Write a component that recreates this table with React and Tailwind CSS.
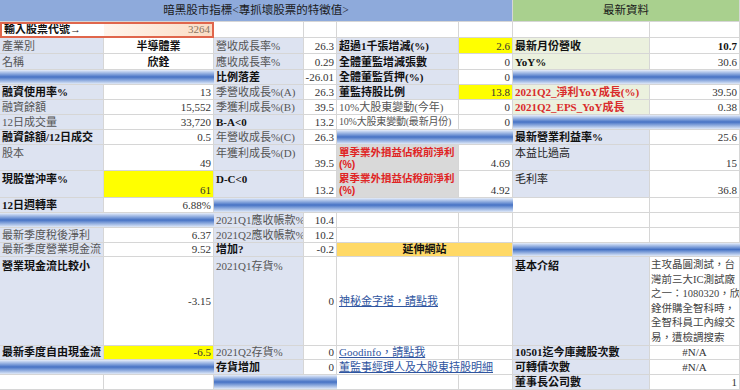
import clsx from "clsx";
import { twMerge } from "tailwind-merge";

// one spreadsheet cell
function C({ className = "", children }) {
  return (
    <div
      className={twMerge(
        clsx(
          "flex items-end overflow-hidden whitespace-nowrap border-r border-b border-[#d6d6d6] px-[2px] leading-[13px]",
          className
        )
      )}
    >
      {children}
    </div>
  );
}

const lab = "bg-[#dde3f1] text-[#555]";
const labD = "bg-[#dde3f1] text-[#222]";
const labB = "bg-[#dde3f1] font-bold text-[#111]";
const num = "justify-end text-[#333]";
const bar = "bg-linear-to-b from-[#e6edf9] via-[#4672c4] to-[#e0e9f7] border-r-0";
const grn = "bg-[#ebf1de] font-bold text-[#111]";
const red = "bg-[#ebf1de] font-bold text-[#d92b2b]";
const gray =
  "bg-[#d9d9d9] flex-col items-start pt-[1px] font-['Liberation_Sans','Noto_Sans_CJK_TC',sans-serif] font-bold text-[10.5px] text-[#e02424] leading-[12px]";
const yel = "bg-[#ffff00] justify-end text-[#333]";
const link = "text-[#2f55a0] underline";

const intro = [
  "主攻晶圓測試，台",
  "灣前三大IC測試廠",
  "之一：1080320，欣",
  "銓併購全智科時，",
  "全智科員工內線交",
  "易，遭檢調搜索",
];

export default function App() {
  return (
    <div className="w-[740px] h-[390px] overflow-hidden bg-white font-['Liberation_Serif','Noto_Sans_CJK_TC',serif] text-[11px]">
      <div className="grid grid-cols-[104px_110px_90px_33px_122px_54px_137px_90px] grid-rows-[22px_16px_16px_16px_15px_15px_15px_15px_15px_26px_27px_15px_15px_15px_14px_89px_14px_15px_15px]">
        {/* header */}
        <C className="col-span-6 items-center justify-center bg-[#8eaadb] text-[11.5px] text-[#1a1a1a]">
          暗黑股市指標&lt;專抓壞股票的特徵值&gt;
        </C>
        <C className="col-span-2 items-center justify-center bg-[#a9d08e] text-[11.5px] text-[#1a1a1a]">
          最新資料
        </C>

        {/* row 2 */}
        <C className="border-y-2 border-l-2 border-r-0 border-[#e0664c] font-bold text-[#111]">輸入股票代號→</C>
        <C className="border-y-2 border-r-2 border-[#e0664c] bg-linear-to-r from-[#fff5ec] to-[#fbdcc4] justify-end text-[#8a7560]">
          3264
        </C>
        <C />
        <C />
        <C />
        <C />
        <C />
        <C />

        {/* row 3 */}
        <C className={lab}>產業別</C>
        <C className="justify-center font-bold text-[#111]">半導體業</C>
        <C className={lab}>營收成長率%</C>
        <C className={num}>26.3</C>
        <C className={labB}>超過1千張增減(%)</C>
        <C className={yel}>2.6</C>
        <C className={grn}>最新月份營收</C>
        <C className="justify-end font-bold text-[#111]">10.7</C>

        {/* row 4 */}
        <C className={lab}>名稱</C>
        <C className="justify-center font-bold text-[#111]">欣銓</C>
        <C className={lab}>應收成長率%</C>
        <C className={num}>0.29</C>
        <C className={labB}>全體董監增減張數</C>
        <C className={num}>0</C>
        <C className={grn}>YoY%</C>
        <C className={num}>30.6</C>

        {/* row 5 */}
        <C className={clsx("col-span-2", bar)} />
        <C className={labB}>比例落差</C>
        <C className={num}>-26.01</C>
        <C className={labB}>全體董監質押(%)</C>
        <C className={num}>0</C>
        <C className={clsx("col-span-2", bar)} />

        {/* row 6 */}
        <C className={labB}>融資使用率%</C>
        <C className={num}>13</C>
        <C className={lab}>季營收成長%(A)</C>
        <C className={num}>26.3</C>
        <C className={labB}>董監持股比例</C>
        <C className={yel}>13.8</C>
        <C className={red}>2021Q2_淨利YoY成長(%)</C>
        <C className={num}>39.50</C>

        {/* row 7 */}
        <C className={lab}>融資餘額</C>
        <C className={num}>15,552</C>
        <C className={lab}>季獲利成長%(B)</C>
        <C className={num}>39.5</C>
        <C className="text-[#555]">10%大股東變動(今年)</C>
        <C className={num}>0</C>
        <C className={red}>2021Q2_EPS_YoY成長</C>
        <C className={num}>0.38</C>

        {/* row 8 */}
        <C className={lab}>12日成交量</C>
        <C className={num}>33,720</C>
        <C className={labB}>B-A&lt;0</C>
        <C className={num}>13.2</C>
        <C className="text-[10px] tracking-[-0.2px] text-[#555]">10%大股東變動(最新月份)</C>
        <C className={num}>0</C>
        <C className={clsx("col-span-2", bar)} />

        {/* row 9 */}
        <C className={labB}>融資餘額/12日成交</C>
        <C className={num}>0.5</C>
        <C className={lab}>年營收成長%(C)</C>
        <C className={num}>26.3</C>
        <C className={clsx("col-span-2", bar)} />
        <C className={labB}>最新營業利益率%</C>
        <C className={num}>25.6</C>

        {/* row 10 */}
        <C className={clsx(lab, "items-start pt-[2px]")}>股本</C>
        <C className={num}>49</C>
        <C className={clsx(lab, "items-start pt-[2px]")}>年獲利成長%(D)</C>
        <C className={num}>39.5</C>
        <C className={gray}>
          <span>單季業外損益佔稅前淨利</span>
          <span>(%)</span>
        </C>
        <C className={num}>4.69</C>
        <C className={clsx(labD, "items-start pt-[2px]")}>本益比過高</C>
        <C className={num}>15</C>

        {/* row 11 */}
        <C className={clsx(labB, "items-start pt-[2px]")}>現股當沖率%</C>
        <C className={yel}>61</C>
        <C className={clsx(labB, "items-start pt-[2px]")}>D-C&lt;0</C>
        <C className={num}>13.2</C>
        <C className={gray}>
          <span>累季業外損益佔稅前淨利</span>
          <span>(%)</span>
        </C>
        <C className={num}>4.92</C>
        <C className={clsx(labD, "items-start pt-[2px]")}>毛利率</C>
        <C className={num}>36.8</C>

        {/* row 12 */}
        <C className={labB}>12日週轉率</C>
        <C className={num}>6.88%</C>
        <C className={clsx("col-span-4", bar)} />
        <C />
        <C />

        {/* row 13 */}
        <C className={clsx("col-span-2", bar)} />
        <C className={lab}>2021Q1應收帳款%</C>
        <C className={num}>10.4</C>
        <C />
        <C />
        <C />
        <C />

        {/* row 14 */}
        <C className={lab}>最新季度稅後淨利</C>
        <C className={num}>6.37</C>
        <C className={lab}>2021Q2應收帳款%</C>
        <C className={num}>10.2</C>
        <C />
        <C />
        <C />
        <C />

        {/* row 15 */}
        <C className={lab}>最新季度營業現金流</C>
        <C className={num}>9.52</C>
        <C className={labB}>增加?</C>
        <C className={num}>-0.2</C>
        <C className="col-span-2 justify-center bg-[#ffd966] font-bold text-[#111]">延伸網站</C>
        <C className={clsx("col-span-2", bar)} />

        {/* row 16 */}
        <C className={clsx(labB, "items-start pt-[3px]")}>營業現金流比較小</C>
        <C className={clsx(num, "items-center")}>-3.15</C>
        <C className={clsx(lab, "items-start pt-[3px]")}>2021Q1存貨%</C>
        <C className={clsx(num, "items-center")}>0</C>
        <C className="items-center">
          <span className={link}>神秘金字塔，請點我</span>
        </C>
        <C />
        <C className={clsx(labB, "items-start pt-[3px]")}>基本介紹</C>
        <C className="flex-col items-start px-[1px] pt-[1px] text-[10.5px] leading-[14.5px] text-[#444]">
          {intro.map((line) => (
            <span key={line}>{line}</span>
          ))}
        </C>

        {/* row 17 */}
        <C className={labB}>最新季度自由現金流</C>
        <C className={yel}>-6.5</C>
        <C className={lab}>2021Q2存貨%</C>
        <C className={num}>0</C>
        <C>
          <span className={link}>Goodinfo，請點我</span>
        </C>
        <C />
        <C className={labB}>10501迄今庫藏股次數</C>
        <C className="justify-center text-[#333]">#N/A</C>

        {/* row 18 */}
        <C className={clsx("col-span-2", bar)} />
        <C className={labB}>存貨增加</C>
        <C className={num}>0</C>
        <C className="col-span-2">
          <span className={link}>董監事經理人及大股東持股明細</span>
        </C>
        <C className={labB}>可轉債次數</C>
        <C className="justify-center text-[#333]">#N/A</C>

        {/* row 19 */}
        <C />
        <C />
        <C className={clsx("col-span-2", bar)} />
        <C />
        <C />
        <C className={labB}>董事長公司數</C>
        <C className={num}>1</C>
      </div>
    </div>
  );
}
